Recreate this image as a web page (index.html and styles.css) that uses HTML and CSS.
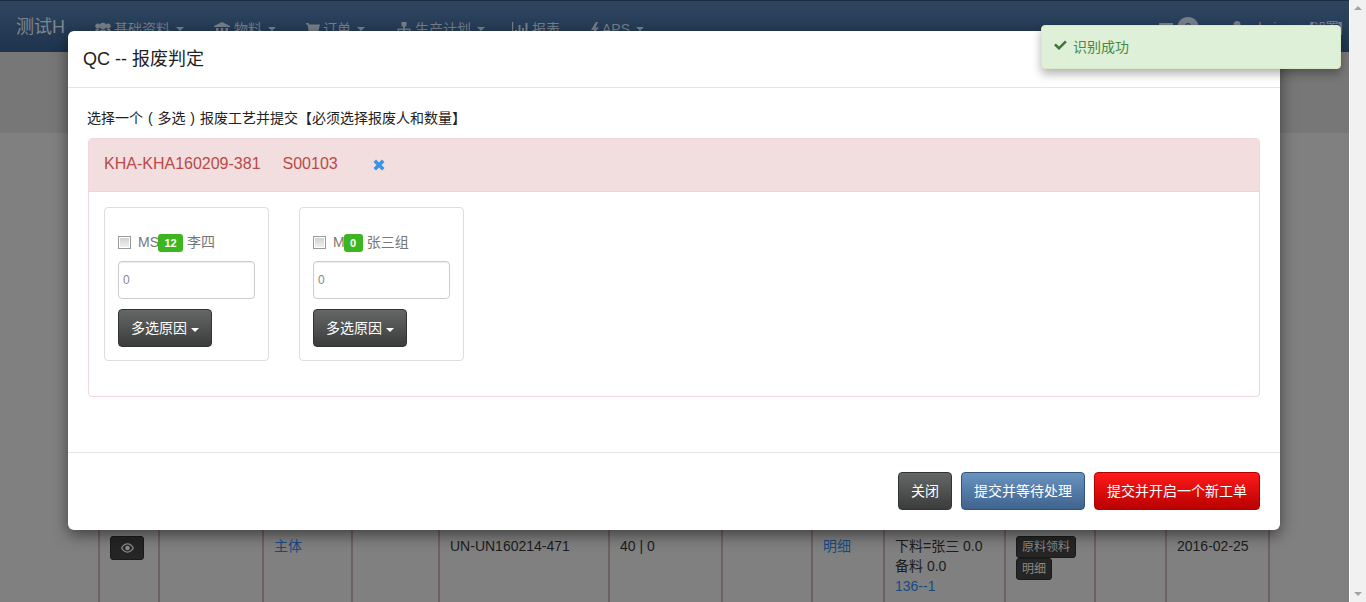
FILE: index.html
```html
<!DOCTYPE html>
<html lang="zh-CN">
<head>
<meta charset="utf-8">
<title>QC -- 报废判定</title>
<link rel="stylesheet" href="styles.css">
</head>
<body>
<div class="app">
  <div class="page">
    <header class="navbar">
      <span class="brand">测试H</span>
      <nav class="menu">
        <span class="item i1"><svg class="ic" viewBox="0 0 16 14"><circle cx="8" cy="4" r="3.200"/><circle cx="2.800" cy="4" r="2.500"/><circle cx="13.200" cy="4" r="2.500"/><path d="M3 13.500c0-4 2-6 5-6s5 2 5 6zM0 10.500c0-2.500 1-4 3-4l1.500 1C3 8.500 2 10 2 11.500zM16 10.500c0-2.500-1-4-3-4l-1.500 1c1.500 1 2.500 2.500 2.500 4z"/></svg>基础资料<i class="caret"></i></span>
        <span class="item i2"><svg class="ic wide" viewBox="0 0 16 14"><path d="M8 0l8 4v1H0V4zM2 6h2.500v5H2zM6.800 6h2.400v5H6.800zM11.500 6H14v5h-2.500zM0 12h16v2H0z"/></svg>物料<i class="caret"></i></span>
        <span class="item i3"><svg class="ic small" viewBox="0 0 14 14"><path d="M0 1h2.500l.5 1.500h11L12.500 9H4l.3 1H12v1.500H3L1.500 2.500H0z"/><circle cx="4.500" cy="12.500" r="1.300"/><circle cx="11" cy="12.500" r="1.300"/></svg>订单<i class="caret"></i></span>
        <span class="item i4"><svg class="ic" viewBox="0 0 16 14"><path d="M5.500 0h5v4.500H9v2h5.500V10H16v4h-5v-4h2V8H9v2h1.500v4h-5v-4H7V8H3v2h2v4H0v-4h1.500V6.500H7v-2H5.500z"/></svg>生产计划<i class="caret"></i></span>
        <span class="item i5"><svg class="ic wide" viewBox="0 0 16 14"><path d="M0 0h1.200v13H16v1H0zM3 8h2v5H3zM6.500 3h2v10h-2zM10 6h2v7h-2zM13.500 1h2v12h-2z"/></svg>报表</span>
        <span class="item i6"><svg class="ic tiny" viewBox="0 0 8 14"><path d="M5 0L0 8h3l-2 6 7-8.500H4.500L7 0z"/></svg>APS<i class="caret"></i></span>
      </nav>
      <div class="navright">
        <svg class="mail" viewBox="0 0 14 12"><path d="M0 1h14v2L7 7 0 3zM0 5l7 4 7-4v7H0z"/></svg>
        <span class="navbadge">9</span>
        <svg class="user" viewBox="0 0 12 14"><circle cx="6" cy="3.500" r="3.500"/><path d="M0 14c0-5 2-6.500 6-6.500s6 1.500 6 6.500z"/></svg>
        <span class="uname">admin</span>
        <span class="setting">【设置】</span>
      </div>
    </header>
    <div class="band"></div>
    <table class="grid">
      <colgroup>
        <col class="c1"><col class="c2"><col class="c3"><col class="c4"><col class="c5"><col class="c6"><col class="c7"><col class="c8"><col class="c9"><col class="c10"><col class="c11"><col class="c12">
      </colgroup>
      <tr>
        <td><button class="eye"><svg viewBox="0 0 14 10"><path fill-rule="evenodd" d="M7 0c3 0 5.500 2 7 5-1.500 3-4 5-7 5S1.500 8 0 5c1.500-3 4-5 7-5zm0 1.200C4.800 1.200 2.800 2.700 1.500 5c1.300 2.300 3.300 3.800 5.500 3.800S11.200 7.300 12.500 5C11.200 2.700 9.200 1.200 7 1.200zM7 2.500a2.500 2.500 0 1 1 0 5 2.500 2.500 0 0 1 0-5z"/></svg></button></td>
        <td></td>
        <td><a class="link">主体</a></td>
        <td></td>
        <td>UN-UN160214-471</td>
        <td>40 | 0</td>
        <td></td>
        <td><a class="link">明细</a></td>
        <td>下料=张三 0.0<br>备料 0.0<br><a class="link">136--1</a></td>
        <td><span class="tag">原料领料</span><br><span class="tag">明细</span></td>
        <td></td>
        <td>2016-02-25</td>
      </tr>
    </table>
  </div>
  <aside class="scrollbar">
    <i class="arrow up"></i>
    <i class="arrow down"></i>
  </aside>
</div>

<section class="modal">
  <div class="modal-head"><h4>QC -- 报废判定</h4></div>
  <div class="modal-body">
    <p class="hint">选择一个 ( 多选 ) 报废工艺并提交【必须选择报废人和数量】</p>
    <div class="panel">
      <div class="panel-head">
        <span class="code">KHA-KHA160209-381</span>
        <span class="code sn">S00103</span>
        <svg class="remove" viewBox="0 0 12 12"><path d="M3 .5L6 3.500 9 .5 11.500 3 8.500 6l3 3L9 11.500l-3-3-3 3L.5 9l3-3-3-3z"/></svg>
      </div>
      <div class="panel-body">
        <div class="worker">
          <label class="who"><input type="checkbox"><span class="mu">MS</span><span class="badge b12">12</span><span class="mu nm">李四</span></label>
          <input class="qty" type="text" value="0">
          <button class="btn dark">多选原因<i class="caret white"></i></button>
        </div>
        <div class="worker">
          <label class="who"><input type="checkbox"><span class="mu">M</span><span class="badge b0">0</span><span class="mu nm">张三组</span></label>
          <input class="qty" type="text" value="0">
          <button class="btn dark">多选原因<i class="caret white"></i></button>
        </div>
      </div>
    </div>
  </div>
  <div class="modal-foot">
    <button class="btn dark">关闭</button>
    <button class="btn blue">提交并等待处理</button>
    <button class="btn red">提交并开启一个新工单</button>
  </div>
</section>

<div class="toast"><svg class="check" viewBox="0 0 13 10"><path d="M1.800 3.500L5 6.500 11 .5l1.800 1.800L5 10 0 5.300z"/></svg>识别成功</div>
</body>
</html>
```
FILE: styles.css
```css
* { box-sizing: border-box; }
html, body { margin: 0; height: 100%; overflow: hidden; }
body {
  font-family: "Liberation Sans", "Noto Sans CJK SC", sans-serif;
  font-size: 14px;
  line-height: 20px;
  color: #1c1c1c;
  background: #808080;
}
.app { display: flex; height: 602px; }
.page { flex: 1; min-width: 0; overflow: hidden; }

.navbar {
  height: 52px;
  display: flex;
  align-items: flex-start;
  background: linear-gradient(#2f4661, #1e344e);
  border-top: 1px solid #1c2c40;
  color: #777e88;
  padding: 14px 0 0 16px;
}
.brand { font-size: 18px; line-height: 24px; width: 79px; color: #7f868e; }
.menu { display: flex; padding-top: 4px; }
.item { display: flex; align-items: center; height: 20px; white-space: nowrap; }
.i1 { width: 119px; }
.i2 { width: 92px; }
.i3 { width: 90px; }
.i4 { width: 116px; }
.i5 { width: 79px; }
.ic { width: 16px; height: 14px; margin-right: 3px; fill: #777e88; flex: none; }
.ic.wide { margin-right: 4px; }
.ic.small { width: 14px; margin-right: 3px; }
.ic.tiny { width: 8px; margin-right: 3px; }
.caret {
  display: inline-block;
  width: 0;
  height: 0;
  margin-left: 6px;
  border-top: 4px solid #777e88;
  border-left: 4px solid transparent;
  border-right: 4px solid transparent;
}
.caret.white { border-top-color: #fff; margin-left: 4px; vertical-align: 1px; }
.navright { margin-left: auto; display: flex; align-items: center; height: 26px; }
.mail { width: 14px; height: 12px; fill: #777e88; margin-right: 4px; }
.navbadge {
  width: 22px; height: 22px; border-radius: 50%;
  background: #777e88; color: #2d4159;
  text-align: center; font-size: 12px; line-height: 22px; margin-right: 32px;
}
.user { width: 12px; height: 14px; fill: #777e88; margin-right: 3px; }
.uname { width: 55px; font-size: 14px; }
.setting { white-space: nowrap; color: #777e88; letter-spacing: -2px; }

.band { height: 81px; background: #777; }

.grid {
  table-layout: fixed;
  border-collapse: separate;
  border-spacing: 0;
  width: 1172px;
  margin: 395px 0 0 98px;
  height: 200px;
}
.c1 { width: 60px; } .c2 { width: 104px; } .c3 { width: 89px; } .c4 { width: 87px; }
.c5 { width: 170px; } .c6 { width: 113px; } .c7 { width: 90px; } .c8 { width: 72px; }
.c9 { width: 121px; } .c10 { width: 90px; } .c11 { width: 71px; } .c12 { width: 105px; }
.grid td {
  vertical-align: top;
  padding: 8px 10px;
  border-left: 2px solid #6e6063;
  white-space: nowrap;
}
.grid td:last-child { border-right: 2px solid #6e6063; }
.link { color: #184a80; }
.eye {
  width: 34px; height: 24px; padding: 0;
  display: flex; align-items: center; justify-content: center;
  background: #252525; border: 1px solid #1a1a1a; border-radius: 3px;
}
.eye svg { width: 13px; height: 10px; fill: #8c8c8c; }
.tag {
  display: inline-block;
  height: 22px;
  padding: 0 5px;
  font-size: 12px;
  line-height: 20px;
  color: #8a8a8a;
  background: #252525;
  border: 1px solid #1a1a1a;
  border-radius: 3px;
}

.scrollbar {
  width: 17px;
  flex: none;
  background: #f1f1f1;
  border-left: 1px solid #fff;
  position: relative;
}
.arrow { position: absolute; left: 4px; width: 0; height: 0; border-left: 4px solid transparent; border-right: 4px solid transparent; }
.arrow.up { top: 6px; border-bottom: 4px solid #a3a3a3; }
.arrow.down { bottom: 6px; border-top: 4px solid #a3a3a3; }

.modal {
  position: absolute;
  left: 68px;
  top: 31px;
  width: 1212px;
  height: 499px;
  background: #fff;
  border-radius: 6px;
  box-shadow: 0 5px 15px rgba(0,0,0,.5);
  display: flex;
  flex-direction: column;
}
.modal-head { height: 57px; padding: 15px; border-bottom: 1px solid #e5e5e5; }
.modal-head h4 { margin: 0; font-size: 18px; font-weight: 400; line-height: 26px; color: #222; }
.modal-body { flex: 1; padding: 20px 20px 0; }
.hint { margin: 0 0 10px -1px; line-height: 20px; color: #222; white-space: nowrap; word-spacing: 1px; }
.panel { border: 1px solid #f3d6dd; border-radius: 4px; height: 259px; }
.panel-head {
  height: 53px;
  background: #f2dede;
  border-bottom: 1px solid #eed3d8;
  border-radius: 3px 3px 0 0;
  color: #b94a48;
  font-size: 16px;
  display: flex;
  align-items: center;
  padding: 0 15px 2px;
}
.sn { margin-left: 22px; }
.remove { width: 12px; height: 12px; fill: #3a94e6; margin-left: 35px; margin-top: 2px; }
.panel-body { display: flex; gap: 30px; padding: 15px; }
.worker {
  width: 165px;
  height: 154px;
  border: 1px solid #ddd;
  border-radius: 4px;
  padding: 23px 13px 0;
}
.who { display: flex; align-items: center; height: 22px; margin-bottom: 8px; white-space: nowrap; color: #777; }
.who input {
  appearance: none;
  width: 13px;
  height: 13px;
  margin: 0 7px 0 0;
  flex: none;
  border: 1px solid #9a9a9a;
  background: linear-gradient(#cfcfcf, #f2f2f2);
  box-shadow: inset 0 0 0 1px #fff;
}
.mu { color: #777; }
.nm { margin-left: 4px; }
.badge {
  display: inline-block;
  height: 18px;
  margin: 2px 0 0 -1px;
  background: #3cb521;
  color: #fff;
  font-size: 11px;
  font-weight: 700;
  line-height: 18px;
  text-align: center;
  border-radius: 3px;
}
.b12 { width: 25px; }
.b0 { width: 19px; }
.qty {
  display: block;
  width: 137px;
  height: 38px;
  padding: 0 4px;
  border: 1px solid #ccc;
  border-radius: 4px;
  font: 12px "Liberation Sans", sans-serif;
  color: #888;
  margin-bottom: 10px;
  box-shadow: inset 0 1px 1px rgba(0,0,0,.075);
}
.btn {
  height: 38px;
  padding: 0 12px 2px;
  font: 14px "Liberation Sans", "Noto Sans CJK SC", sans-serif;
  color: #fff;
  border-radius: 4px;
  border: 1px solid #333;
  white-space: nowrap;
}
.dark { background: linear-gradient(#636766, #3b3d3c); border-color: #333; }
.blue { background: linear-gradient(#6a93c0, #3e638e); border-color: #2f5480; }
.red { background: linear-gradient(#ff1a1a, #b90000); border-color: #b00000; }
.modal-foot {
  height: 78px;
  border-top: 1px solid #e5e5e5;
  display: flex;
  justify-content: flex-end;
  gap: 9px;
  padding: 19px 20px 0;
}

.toast {
  position: absolute;
  left: 1041px;
  top: 25px;
  width: 300px;
  height: 44px;
  background: #dff0d8;
  border: 1px solid #d6e9c6;
  border-radius: 4px;
  color: #468847;
  box-shadow: 0 5px 10px rgba(0,0,0,.3);
  padding: 11px 12px;
  display: flex;
  align-items: center;
}
.check { width: 13px; height: 10px; fill: #3c763d; margin: -4px 6px 0 0; }
```
